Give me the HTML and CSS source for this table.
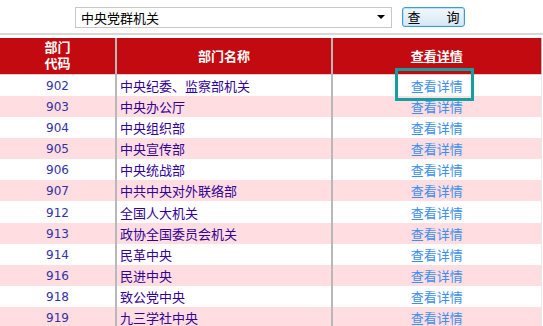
FILE: index.html
```html
<!DOCTYPE html>
<html lang="zh">
<head>
<meta charset="utf-8">
<link rel="stylesheet" href="styles.css">
</head>
<body>
<div class="search">
  <div class="select">
    <span>中央党群机关</span>
    <span class="arrow"></span>
  </div>
  <button class="btn">查　　询</button>
</div>
<div class="wrap">
<table class="grid">
  <colgroup><col class="c1"><col class="c2"><col class="c3"></colgroup>
  <thead>
    <tr><th><div class="two">部门<br>代码</div></th><th>部门名称</th><th><span class="ul">查看详情</span></th></tr>
  </thead>
  <tbody>
    <tr><td class="code">902</td><td class="name">中央纪委、监察部机关</td><td class="link"><span class="hl">查看详情</span></td></tr>
    <tr class="alt"><td class="code">903</td><td class="name">中央办公厅</td><td class="link">查看详情</td></tr>
    <tr><td class="code">904</td><td class="name">中央组织部</td><td class="link">查看详情</td></tr>
    <tr class="alt"><td class="code">905</td><td class="name">中央宣传部</td><td class="link">查看详情</td></tr>
    <tr><td class="code">906</td><td class="name">中央统战部</td><td class="link">查看详情</td></tr>
    <tr class="alt"><td class="code">907</td><td class="name">中共中央对外联络部</td><td class="link">查看详情</td></tr>
    <tr><td class="code">912</td><td class="name">全国人大机关</td><td class="link">查看详情</td></tr>
    <tr class="alt"><td class="code">913</td><td class="name">政协全国委员会机关</td><td class="link">查看详情</td></tr>
    <tr><td class="code">914</td><td class="name">民革中央</td><td class="link">查看详情</td></tr>
    <tr class="alt"><td class="code">916</td><td class="name">民进中央</td><td class="link">查看详情</td></tr>
    <tr><td class="code">918</td><td class="name">致公党中央</td><td class="link">查看详情</td></tr>
    <tr class="alt"><td class="code">919</td><td class="name">九三学社中央</td><td class="link">查看详情</td></tr>
  </tbody>
</table>
</div>
</body>
</html>
```
FILE: styles.css
```css
html, body {
  margin: 0;
  padding: 0;
  background: #fff;
  overflow: hidden;
}
body {
  font-family: "Noto Sans CJK SC", "Liberation Sans", sans-serif;
  font-size: 13px;
}
.search {
  display: flex;
  align-items: center;
  height: 35px;
  padding-left: 75px;
  border-bottom: 2px solid #d8d8d8;
  box-sizing: border-box;
  padding-top: 1px;
}
.select {
  width: 317px;
  height: 21px;
  box-sizing: border-box;
  border: 1px solid #c8c8c8;
  display: flex;
  align-items: center;
  justify-content: space-between;
  padding: 0 5px 0 5px;
  font-size: 13px;
  color: #000;
}
.arrow {
  width: 0;
  height: 0;
  border-left: 4px solid transparent;
  border-right: 4px solid transparent;
  border-top: 4px solid #000;
  margin-right: 1px;
}
.btn {
  margin-left: 10px;
  width: 63px;
  height: 20px;
  box-sizing: border-box;
  border: 1px solid #3d9ad8;
  border-radius: 3px;
  background: linear-gradient(#f2f8fc, #d6e8f4);
  font-family: "Noto Sans CJK SC", sans-serif;
  font-size: 13px;
  line-height: 16px;
  padding: 0;
  color: #000;
  box-shadow: inset 0 0 0 1px #bfe0f5;
}
.wrap {
  padding-top: 3px;
  width: 541px;
}
.grid {
  border-collapse: collapse;
  width: 541px;
  table-layout: fixed;
}
.c1 { width: 116px; }
.c2 { width: 216px; }
.c3 { width: 209px; }
.grid th {
  background: #c20a10;
  color: #fff;
  font-weight: bold;
  font-size: 13px;
  line-height: 16px;
  height: 36px;
  padding: 0;
  border-left: 2px solid #b8b8b8;
  border-bottom: 1px solid #f0c8c8;
  box-sizing: border-box;
}
.two {
  font-size: 13px;
  line-height: 16px;
  margin-top: -1px;
}
.grid th:first-child { border-left: none; }
.grid th:last-child { border-right: 1px solid #b8b8b8; }
.ul { text-decoration: underline; }
.grid td {
  padding: 1px 0 0 0;
  height: 21.2px;
  box-sizing: border-box;
  line-height: 20px;
  border-left: 2px solid #b8b8b8;
  white-space: nowrap;
}
.grid td:first-child { border-left: none; }
.grid td:last-child { border-right: 1px solid #e8e8e8; }
.alt td { background: #ffdde0; }
.code {
  text-align: center;
  font-family: "DejaVu Sans", sans-serif;
  font-size: 12px;
  color: #3232a8;
}
.name {
  padding-left: 3px !important;
  color: #330099;
}
.link {
  text-align: center;
  color: #3c8ff0;
}
.hl {
  position: relative;
}
.hl::after {
  content: "";
  position: absolute;
  left: -16px;
  right: -11px;
  top: -8px;
  bottom: -6px;
  border: 3px solid #12a0a0;
}
```
